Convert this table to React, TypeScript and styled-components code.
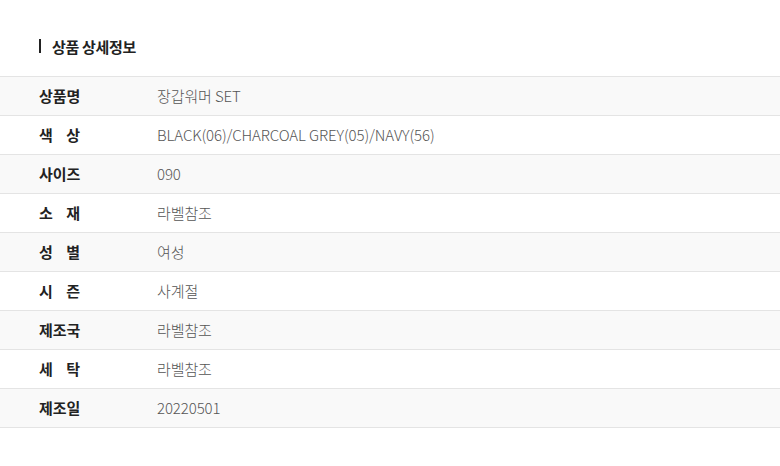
import React from 'react'
import styled, { createGlobalStyle } from 'styled-components'

const GlobalStyle = createGlobalStyle`
  html, body {
    margin: 0;
    padding: 0;
    background: #fff;
    font-family: "Noto Sans CJK KR", "Noto Sans", sans-serif;
  }
`

const Section = styled.section`
  width: 780px;
  padding-top: 36px;
`

const Title = styled.h2`
  display: flex;
  align-items: center;
  gap: 11px;
  margin: 0 0 20px 39px;
  height: 20px;
  font-size: 15px;
  font-weight: 700;
  color: #222;
  letter-spacing: -0.3px;

  &::before {
    content: '';
    display: block;
    width: 2px;
    height: 14px;
    background: #222;
  }
`

const Table = styled.div`
  border-top: 1px solid #e4e4e4;
`

const Row = styled.div<{ $shaded: boolean }>`
  display: flex;
  align-items: center;
  height: 38px;
  padding-bottom: 2px;
  box-sizing: border-box;
  height: 39px;
  border-bottom: 1px solid #e4e4e4;
  background: ${(p) => (p.$shaded ? '#f9f9f9' : '#fff')};
`

const Label = styled.div`
  width: 41px;
  margin-left: 39px;
  margin-right: 77px;
  font-size: 15px;
  font-weight: 700;
  color: #222;
  text-align: justify;
  text-align-last: justify;
  white-space: nowrap;
`

const Value = styled.div`
  font-size: 15px;
  font-weight: 300;
  color: #555;
  letter-spacing: -0.1px;
`

const rows: [string, string][] = [
  ['상품명', '장갑워머 SET'],
  ['색 상', 'BLACK(06)/CHARCOAL GREY(05)/NAVY(56)'],
  ['사이즈', '090'],
  ['소 재', '라벨참조'],
  ['성 별', '여성'],
  ['시 즌', '사계절'],
  ['제조국', '라벨참조'],
  ['세 탁', '라벨참조'],
  ['제조일', '20220501'],
]

export default function App() {
  return (
    <>
      <GlobalStyle />
      <Section>
        <Title>상품 상세정보</Title>
        <Table>
          {rows.map(([label, value], i) => (
            <Row key={label} $shaded={i % 2 === 0}>
              <Label>{label}</Label>
              <Value>{value}</Value>
            </Row>
          ))}
        </Table>
      </Section>
    </>
  )
}
